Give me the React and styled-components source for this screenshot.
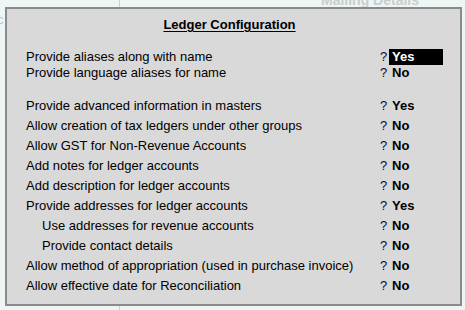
import React from "react";
import styled, { createGlobalStyle } from "styled-components";

const GlobalStyle = createGlobalStyle`
  html, body {
    margin: 0;
    padding: 0;
    background: #eef6f5;
    font-family: "Liberation Sans", Arial, sans-serif;
  }
`;

const groups = [
  {
    rowHeight: 16,
    gap: 16,
    rows: [
      { label: "Provide aliases along with name", value: "Yes", active: true },
      { label: "Provide language aliases for name", value: "No" },
    ],
  },
  {
    rowHeight: 20,
    gap: 15,
    rows: [
      { label: "Provide advanced information in masters", value: "Yes" },
      { label: "Allow creation of tax ledgers under other groups", value: "No" },
      { label: "Allow GST for Non-Revenue Accounts", value: "No" },
      { label: "Add notes for ledger accounts", value: "No" },
      { label: "Add description for ledger accounts", value: "No" },
      { label: "Provide addresses for ledger accounts", value: "Yes" },
      { label: "Use addresses for revenue accounts", value: "No", indent: true },
      { label: "Provide contact details", value: "No", indent: true },
      { label: "Allow method of appropriation (used in purchase invoice)", value: "No" },
      { label: "Allow effective date for Reconciliation", value: "No" },
    ],
  },
];

// Screen behind the dialog
const Page = styled.div`
  position: relative;
  display: grid;
  grid-template-columns: 120px 1fr;
  height: 310px;
  overflow: hidden;
`;

const LeftPane = styled.div`
  border-right: 1px solid #c9d0d0;
  padding-top: 12px;
  margin-left: -3px;
  font-size: 13px;
  color: #b8c4d6;
`;

const RightPane = styled.div`
  display: flex;
  justify-content: flex-end;
  padding-right: 46px;
`;

const SectionTitle = styled.div`
  margin-top: -8px;
  font-size: 14px;
  font-weight: 700;
  line-height: 16px;
  color: #c8cfcf;
`;

// Dialog
const Dialog = styled.div`
  position: absolute;
  top: 7px;
  left: 5px;
  width: 457px;
  height: 299px;
  box-sizing: border-box;
  border: 2px solid #8a8a8a;
  background: #d9d9d9;
  padding: 8px 17px 0 19px;
  color: #000;
`;

const Title = styled.div`
  text-align: center;
  padding-right: 10px;
  font-size: 13px;
  line-height: 16px;
  font-weight: 700;
  text-decoration: underline;
  text-underline-offset: 2px;
`;

const Group = styled.div`
  display: flex;
  flex-direction: column;
  margin-top: ${(p) => p.$gap}px;
`;

const Row = styled.div`
  display: grid;
  grid-template-columns: 1fr 9px 54px;
  height: ${(p) => p.$h}px;
  line-height: ${(p) => p.$h}px;
  font-size: 13px;
  white-space: nowrap;
`;

const Label = styled.span`
  padding-left: ${(p) => (p.$indent ? 16 : 0)}px;
`;

const Ask = styled.span`
  color: #0a0a30;
`;

const Value = styled.span`
  padding-left: 3px;
  font-weight: 700;
  background: ${(p) => (p.$active ? "#000" : "transparent")};
  color: ${(p) => (p.$active ? "#fff" : "#000")};
`;

export default function App() {
  return (
    <>
      <GlobalStyle />
      <Page>
        <LeftPane>c</LeftPane>
        <RightPane>
          <SectionTitle>Mailing Details</SectionTitle>
        </RightPane>
        <Dialog>
          <Title>Ledger Configuration</Title>
          {groups.map((g, gi) => (
            <Group key={gi} $gap={g.gap}>
              {g.rows.map((r) => (
                <Row key={r.label} $h={g.rowHeight}>
                  <Label $indent={r.indent}>{r.label}</Label>
                  <Ask>?</Ask>
                  <Value $active={r.active}>{r.value}</Value>
                </Row>
              ))}
            </Group>
          ))}
        </Dialog>
      </Page>
    </>
  );
}
